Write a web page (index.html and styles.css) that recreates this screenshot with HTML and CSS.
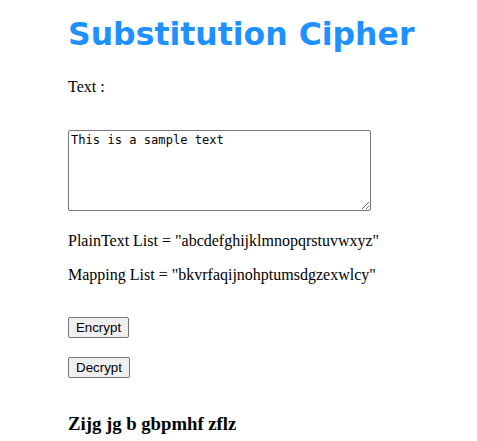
FILE: index.html
```html
<!DOCTYPE html>
<html>
<head>
<meta charset="utf-8">
<link rel="stylesheet" href="styles.css">
</head>
<body>
<div class="page">
  <h1 class="title">Substitution Cipher</h1>
  <p class="label">Text :</p>
  <textarea class="input">This is a sample text</textarea>
  <p class="list">PlainText List = "abcdefghijklmnopqrstuvwxyz"</p>
  <p class="list">Mapping List = "bkvrfaqijnohptumsdgzexwlcy"</p>
  <div class="actions">
    <button class="btn">Encrypt</button>
    <button class="btn">Decrypt</button>
  </div>
  <h3 class="result">Zijg jg b gbpmhf zflz</h3>
</div>
</body>
</html>
```
FILE: styles.css
```css
html, body {
  margin: 0;
  padding: 0;
  background: #fff;
}
.page {
  padding: 11px 0 0 68px;
  font-family: "Liberation Serif", "Times New Roman", serif;
  font-size: 16px;
  color: #000;
}
.title {
  margin: 0;
  font-family: "DejaVu Sans", Verdana, sans-serif;
  font-weight: bold;
  font-size: 31.5px;
  line-height: 46px;
  color: #1e90ff;
}
.label {
  margin: 21px 0 0;
  line-height: 18px;
}
.input {
  display: block;
  margin: 34px 0 0;
  width: 303px;
  height: 81px;
  box-sizing: border-box;
  border: 1px solid #767676;
  border-radius: 2px;
  padding: 2px;
  font-family: "DejaVu Sans Mono", Consolas, monospace;
  font-size: 12.1px;
  resize: both;
}
.list {
  margin: 21px 0 0;
  line-height: 18px;
}
.list + .list {
  margin-top: 16px;
}
.actions {
  display: flex;
  flex-direction: column;
  align-items: flex-start;
  gap: 19px;
  margin-top: 33px;
}
.btn {
  font-family: "Liberation Sans", Arial, sans-serif;
  font-size: 13.33px;
  padding: 1px 6px;
  height: 21px;
  width: 61px;
  border: 1px solid #767676;
  border-radius: 2px;
  background: #efefef;
  color: #000;
}
.btn + .btn {
  width: 62px;
}
.result {
  margin: 35px 0 0;
  font-size: 18.72px;
  font-weight: bold;
  line-height: 22px;
}
```
